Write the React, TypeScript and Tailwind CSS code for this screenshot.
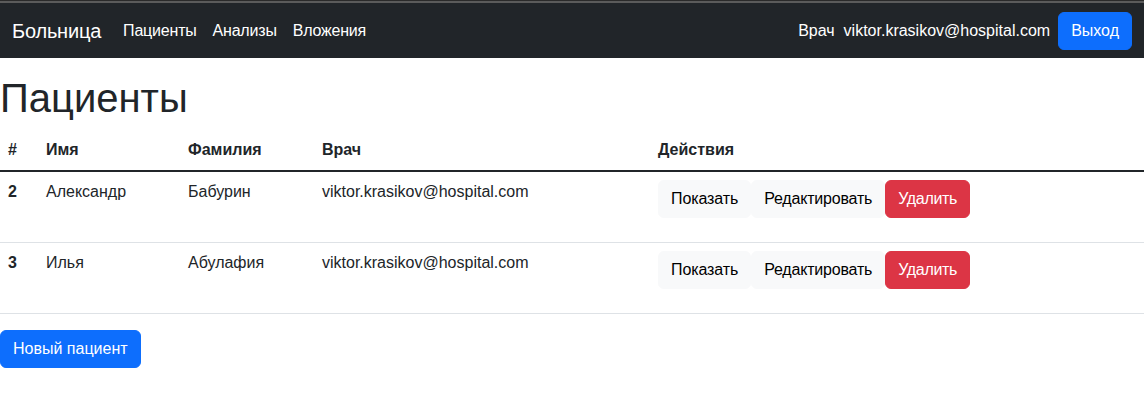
import React from "react";

const rows = [
  { id: 2, first: "Александр", last: "Бабурин", doctor: "viktor.krasikov@hospital.com" },
  { id: 3, first: "Илья", last: "Абулафия", doctor: "viktor.krasikov@hospital.com" },
];

export default function App() {
  return (
    <div className="min-h-[407px] bg-white text-[#212529] text-[16px] leading-[24px] font-['Liberation_Sans',Arial,sans-serif]">
      <div className="h-px bg-[#2a2a2a]" />
      <div className="h-[2px] bg-[#5b5b5b]" />
      <nav className="h-[55px] bg-[#212529] px-[12px] flex items-center justify-between mb-[16px]">
        <div className="flex items-center">
          <span className="text-white text-[20px] leading-[30px] mr-[14px] tracking-[-0.2px]">Больница</span>
          <span className="text-white px-[8px] tracking-[-0.2px]">Пациенты</span>
          <span className="text-white px-[8px] tracking-[-0.2px]">Анализы</span>
          <span className="text-white px-[8px] tracking-[-0.2px]">Вложения</span>
        </div>
        <div className="flex items-center">
          <span className="text-white">Врач</span>
          <span className="text-white ml-[9px] mr-[8px]">viktor.krasikov@hospital.com</span>
          <button className="bg-[#0d6efd] text-white rounded-[6px] px-[12px] py-[6px] border border-[#0d6efd] leading-[24px]">
            Выход
          </button>
        </div>
      </nav>
      <h1 className="text-[40px] leading-[48px] font-medium mb-[8px]">Пациенты</h1>
      <table className="w-full border-collapse mb-[16px]">
        <thead>
          <tr className="border-b-2 border-[#212529]">
            <th className="w-[38px] text-left font-bold p-[8px]">#</th>
            <th className="w-[142px] text-left font-bold p-[8px]">Имя</th>
            <th className="w-[134px] text-left font-bold p-[8px]">Фамилия</th>
            <th className="w-[336px] text-left font-bold p-[8px]">Врач</th>
            <th className="text-left font-bold p-[8px]">Действия</th>
          </tr>
        </thead>
        <tbody>
          {rows.map((r) => (
            <tr key={r.id} className="border-b border-[#dee2e6] align-top">
              <td className="p-[8px] font-bold">{r.id}</td>
              <td className="p-[8px]">{r.first}</td>
              <td className="p-[8px]">{r.last}</td>
              <td className="p-[8px]">{r.doctor}</td>
              <td className="p-[8px]">
                <div className="flex items-center mb-[16px]">
                  <button className="bg-[#f8f9fa] border border-[#f8f9fa] rounded-[6px] px-[12px] py-[6px] leading-[24px] text-[#000] tracking-[-0.1px]">
                    Показать
                  </button>
                  <button className="bg-[#f8f9fa] border border-[#f8f9fa] rounded-[6px] px-[12px] py-[6px] leading-[24px] text-[#000] tracking-[-0.2px]">
                    Редактировать
                  </button>
                  <button className="bg-[#dc3545] border border-[#dc3545] rounded-[6px] px-[12px] py-[6px] leading-[24px] text-white tracking-[-0.3px]">
                    Удалить
                  </button>
                </div>
              </td>
            </tr>
          ))}
        </tbody>
      </table>
      <button className="bg-[#0d6efd] text-white rounded-[6px] px-[12px] py-[6px] border border-[#0d6efd] leading-[24px]">
        Новый пациент
      </button>
    </div>
  );
}
